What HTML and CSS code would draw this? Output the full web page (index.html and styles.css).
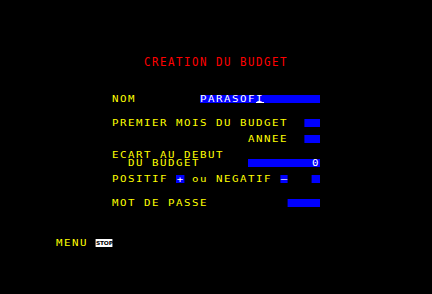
FILE: index.html
```html
<!DOCTYPE html>
<html lang="fr">
<head>
<meta charset="UTF-8" />
<title>Creation du budget</title>
<link rel="stylesheet" href="styles.css">
</head>
<body>

<div class="screen">
 <div class="grid">
  <div class="row title-row">           <span class="title">CREATION DU BUDGET</span></div>

  <div class="row gap-nom">       NOM        <span class="fld w15">PARASOF<span class="cur">I</span></span></div>
  <div class="row gap2">       PREMIER MOIS DU BUDGET  <span class="fld w2"></span></div>
  <div class="row gap1">                        ANNEE  <span class="fld w2"></span></div>
  <div class="row gap1">       ECART AU DEBUT</div>
  <div class="row">         DU BUDGET      <span class="fld w9 right">0</span></div>
  <div class="row gap1">       POSITIF <span class="key">+</span> ou NEGATIF <span class="key">–</span>   <span class="fld w1"></span></div>
  <div class="row gap2">       MOT DE PASSE          <span class="fld w4"></span></div>

  <div class="row gap4">MENU <span class="stop">STOP</span></div>
 </div>
</div>

</body>
</html>
```

FILE: styles.css
```css
/* one character cell = 8px on screen; the grid is drawn at 1/1.2 and stretched */
:root { --c: calc(8px / 1.2); }
body { margin: 0; background: #000; }
.screen { width: 432px; height: 294px; padding: 56px 0 0 56px; box-sizing: border-box; overflow: hidden; }
.grid { transform: scaleX(1.2); transform-origin: 0 0; font-family: "DejaVu Sans Mono", monospace; font-size: 9px; color: #ffff00; }
.row { height: 8px; line-height: 8px; white-space: pre; letter-spacing: calc(var(--c) - 1ch); }
.title-row { height: 16px; color: #ff0000; }
.title { display: inline-block; transform: scaleY(1.45); transform-origin: top left; }
.gap-nom { margin-top: 23px; }
.gap1 { margin-top: 8px; }
.gap2 { margin-top: 16px; }
.gap4 { margin-top: 32px; }
.fld { display: inline-block; vertical-align: top; height: 8px; background: #0000ff; color: #fff; }
.right { text-align: right; }
.w1 { width: var(--c); }
.w2 { width: calc(var(--c) * 2); }
.w4 { width: calc(var(--c) * 4); }
.w9 { width: calc(var(--c) * 9); }
.w15 { width: calc(var(--c) * 15); }
.cur { text-decoration: underline; text-underline-offset: 0; }
.key { display: inline-block; vertical-align: top; width: var(--c); height: 8px; background: #0000ff; color: #fff; letter-spacing: 0; text-align: center; }
.stop { display: inline-block; vertical-align: top; width: calc(var(--c) * 2); height: 8px; line-height: 8.5px; background: #fff; color: #000; font-family: "DejaVu Sans Condensed", sans-serif; font-weight: bold; font-size: 5.5px; letter-spacing: -0.2px; text-align: center; }
```
